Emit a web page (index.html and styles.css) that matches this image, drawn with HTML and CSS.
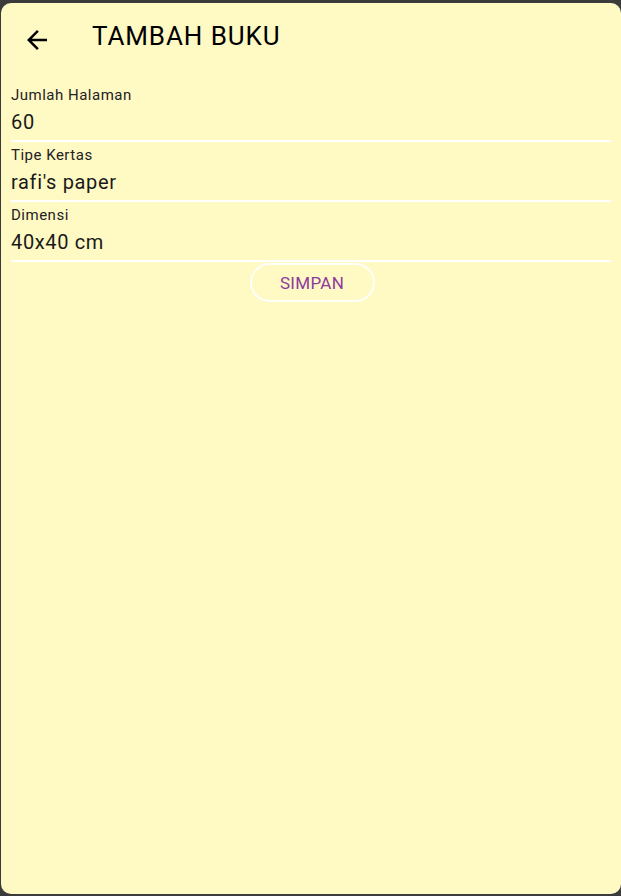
FILE: index.html
```html
<!DOCTYPE html>
<html>
<head>
<meta charset="utf-8">
<link rel="stylesheet" href="styles.css">
</head>
<body>
<div class="window">
  <header class="appbar">
    <span class="back">
      <svg viewBox="4 4 16 16" width="20" height="20"><path d="M20 11H7.83l5.59-5.59L12 4l-8 8 8 8 1.41-1.41L7.83 13H20v-2z" fill="#000"/></svg>
    </span>
    <h1 class="title">TAMBAH BUKU</h1>
  </header>
  <form class="form">
    <div class="field">
      <label class="label">Jumlah Halaman</label>
      <div class="value">60</div>
    </div>
    <div class="field">
      <label class="label">Tipe Kertas</label>
      <div class="value">rafi's paper</div>
    </div>
    <div class="field">
      <label class="label">Dimensi</label>
      <div class="value">40x40 cm</div>
    </div>
    <div class="actions">
      <button type="button" class="btn">SIMPAN</button>
    </div>
  </form>
</div>
</body>
</html>
```
FILE: styles.css
```css
html, body {
  margin: 0;
  padding: 0;
  background: #3b3b3b;
  height: 100%;
}
body {
  padding: 3px 0 2px 1px;
  box-sizing: border-box;
  font-family: Roboto, "Noto Sans", sans-serif;
}
.window {
  height: 891px;
  width: 620px;
  background: #fff9c4;
  border-radius: 10px;
  overflow: hidden;
}
.appbar {
  height: 72px;
  display: flex;
  align-items: center;
  padding-left: 25px;
  box-sizing: border-box;
  padding-bottom: 2px;
}
.back {
  width: 22px;
  height: 22px;
  display: flex;
  align-items: center;
  justify-content: center;
  margin-top: 4px;
}
.title {
  margin: 0 0 4px 44px;
  font-size: 26px;
  font-weight: 400;
  color: #000;
  letter-spacing: 0.9px;
}
.form {
  padding: 7px 10px 0 10px;
}
.field {
  border-bottom: 2px solid #ffffff;
  height: 55px;
  box-sizing: content-box;
  padding-top: 3px;
}
.label {
  display: block;
  font-size: 15px;
  color: #222;
  line-height: 20px;
  letter-spacing: 0.5px;
}
.value {
  font-size: 20px;
  color: #1a1a1a;
  line-height: 28px;
  margin-top: 3px;
  letter-spacing: 0.65px;
}
.actions {
  display: flex;
  justify-content: center;
  padding-top: 1px;
}
.btn {
  width: 125px;
  height: 39px;
  border: 2px solid rgba(255, 255, 255, 0.9);
  border-radius: 20px;
  background: transparent;
  color: #8e3a9f;
  font-family: Roboto, "Noto Sans", sans-serif;
  font-size: 17px;
  letter-spacing: 0.3px;
  margin-left: 2px;
}
```
